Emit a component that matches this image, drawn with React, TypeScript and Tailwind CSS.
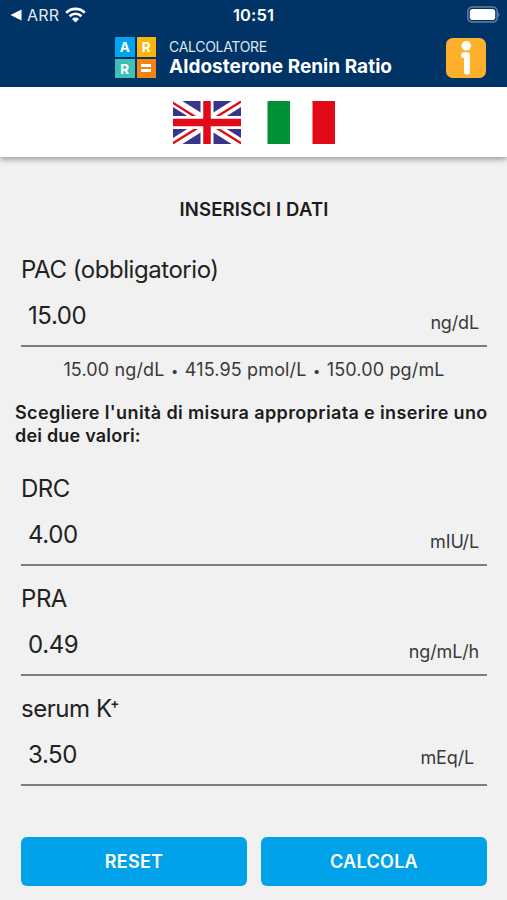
import type { ReactNode } from "react";

type FieldProps = {
  label: ReactNode;
  value: string;
  unit: string;
  unitClass?: string;
};

function Field({ label, value, unit, unitClass = "pt-[7px] pr-2" }: FieldProps) {
  return (
    <div className="h-[110px] border-b-2 border-[#7d7d7d] pt-[18px] text-[#222222]">
      <div className="h-[30px] text-[24px] leading-[30px] tracking-[-0.45px]">{label}</div>
      <div className="mt-4 flex h-[30px] justify-between pl-[7px]">
        <span className="text-[24px] leading-[30px] tracking-[-0.4px]">{value}</span>
        <span className={`text-[18px] leading-[30px] tracking-[-0.15px] text-[#3a3a3a] ${unitClass}`}>{unit}</span>
      </div>
    </div>
  );
}

function StatusBar() {
  return (
    <div className="grid h-[30px] grid-cols-3 items-center pl-[10px] pr-[7px] text-white">
      <div className="flex items-center">
        <svg width="12" height="12" viewBox="0 0 12 12" fill="white">
          <path d="M.5 6 11.5.5v11z" />
        </svg>
        <span className="ml-[5px] text-[16px] leading-5 tracking-[0.2px] text-[#e4e9f0]">ARR</span>
        <svg className="ml-[6px]" width="21" height="16" viewBox="0 0 21 16" fill="none" stroke="white" strokeWidth="2.7">
          <path d="M1.2 5.7a13.2 13.2 0 0 1 18.6 0" />
          <path d="M4.6 9.2a8.3 8.3 0 0 1 11.8 0" />
          <path d="M10.5 15.4 7 12a5 5 0 0 1 7 0z" fill="white" stroke="none" />
        </svg>
      </div>
      <div className="pr-[3px] text-center text-[16.5px] font-semibold leading-5 tracking-[0.15px]">10:51</div>
      <div className="flex justify-end pb-[2px]">
        <svg width="33" height="17" viewBox="0 0 33 17">
          <rect x="0.8" y="1" width="29.4" height="15" rx="4.5" fill="none" stroke="#667ea1" strokeWidth="1.5" />
          <rect x="2.8" y="3" width="25.4" height="11" rx="2.8" fill="white" />
          <path d="M31.3 6.2c1.6.7 1.6 3.9 0 4.6z" fill="#667ea1" />
        </svg>
      </div>
    </div>
  );
}

function Logo() {
  return (
    <div className="grid grid-cols-2 gap-[2px] text-center text-[13.5px] font-bold leading-[20.5px] text-white">
      <div className="h-[19.5px] w-[19.5px] bg-[#00a5ee]">A</div>
      <div className="h-[19.5px] w-[19.5px] bg-[#fab60a]">R</div>
      <div className="h-[19.5px] w-[19.5px] bg-[#3fbfb5]">R</div>
      <div className="flex h-[19.5px] w-[19.5px] flex-col items-center justify-center gap-[2px] bg-[#f5830f]">
        <div className="h-[3px] w-[10px] bg-white" />
        <div className="h-[3px] w-[10px] bg-white" />
      </div>
    </div>
  );
}

function Header() {
  return (
    <div className="flex h-[57px] items-start pl-[115px] pr-[21px] text-white">
      <div className="pt-[7px]">
        <Logo />
      </div>
      <div className="ml-[13px] flex-1 pt-[8px]">
        <div className="text-[14px] leading-[18px] tracking-[-0.3px] text-[#dfe6ef]">CALCOLATORE</div>
        <div className="whitespace-nowrap text-[19px] font-bold leading-[21px] tracking-[0.03px]">Aldosterone Renin Ratio</div>
      </div>
      <svg className="mt-[8px]" width="40" height="40" viewBox="0 0 40 40">
        <rect width="40" height="40" rx="6.5" fill="#fdb02b" />
        <circle cx="20.3" cy="7.8" r="4.8" fill="white" />
        <path d="M18 17.2h3V33.7" fill="none" stroke="white" strokeWidth="5.8" strokeLinecap="round" strokeLinejoin="round" />
      </svg>
    </div>
  );
}

function Flags() {
  return (
    <div className="relative flex h-[70px] gap-[26px] bg-white pl-[173px] pt-[14px] shadow-[0_2px_6px_rgba(0,0,0,0.4)]">
      <svg width="68" height="43" viewBox="0 0 68 43">
        <rect width="68" height="43" fill="#39368a" />
        <path d="M0 0 68 43M68 0 0 43" stroke="white" strokeWidth="10" />
        <path d="M-1 1.2 28 19.5M40 18 69 0M-1 42.8 28 24.7M40 24.7 69 42.8" stroke="#e30a17" strokeWidth="2.4" />
        <path d="M34 0v43M0 21.5h68" stroke="white" strokeWidth="13" />
        <path d="M34 0v43M0 21.5h68" stroke="#e30a17" strokeWidth="7.5" />
      </svg>
      <svg width="69" height="43" viewBox="0 0 69 43">
        <rect x="0.5" width="22.5" height="43" fill="#009036" />
        <rect x="45.5" width="22.5" height="43" fill="#e30a17" />
      </svg>
    </div>
  );
}

function Dot() {
  return <span className="mx-[1.2px] text-[13px]">•</span>;
}

export default function App() {
  return (
    <div className="h-[900px] w-[507px] overflow-hidden bg-[#f1f1f1] font-['Inter',sans-serif]">
      <div className="h-[87px] bg-[#003366]">
        <StatusBar />
        <Header />
      </div>
      <Flags />

      <div className="pl-[21px] pr-5">
        <h1 className="h-[80px] pt-[40px] text-center text-[18.5px] font-semibold leading-6 tracking-[0.15px] text-[#1c1c1c]">
          INSERISCI I DATI
        </h1>
        <Field label="PAC (obbligatorio)" value="15.00" unit="ng/dL" />
        <p className="h-[54px] whitespace-nowrap pt-[11px] text-center text-[18px] leading-6 tracking-[0.14px] text-[#3a3a3a]">
          15.00 ng/dL <Dot /> 415.95 pmol/L <Dot /> 150.00 pg/mL
        </p>
        <p className="-mx-[6px] h-[55px] whitespace-nowrap text-[18px] font-semibold leading-[23px] tracking-[0.37px] text-[#1c1c1c]">
          Scegliere l'unità di misura appropriata e inserire uno
          <br />
          <span className="tracking-[0.2px]">dei due valori:</span>
        </p>
        <Field label="DRC" value="4.00" unit="mIU/L" />
        <Field label="PRA" value="0.49" unit="ng/mL/h" />
        <Field
          label={
            <>
              serum K<sup className="top-[-9px] -ml-[1.5px] text-[13.5px] font-semibold">+</sup>
            </>
          }
          value="3.50"
          unit="mEq/L"
          unitClass="pt-[3px] pr-[13px]"
        />
        <div className="mt-[51px] flex gap-[14px] text-[18px] font-semibold tracking-[0.3px] text-white">
          <button className="h-[49px] flex-1 rounded-md bg-[#00a2ea]">RESET</button>
          <button className="h-[49px] flex-1 rounded-md bg-[#00a2ea]">CALCOLA</button>
        </div>
      </div>
    </div>
  );
}
